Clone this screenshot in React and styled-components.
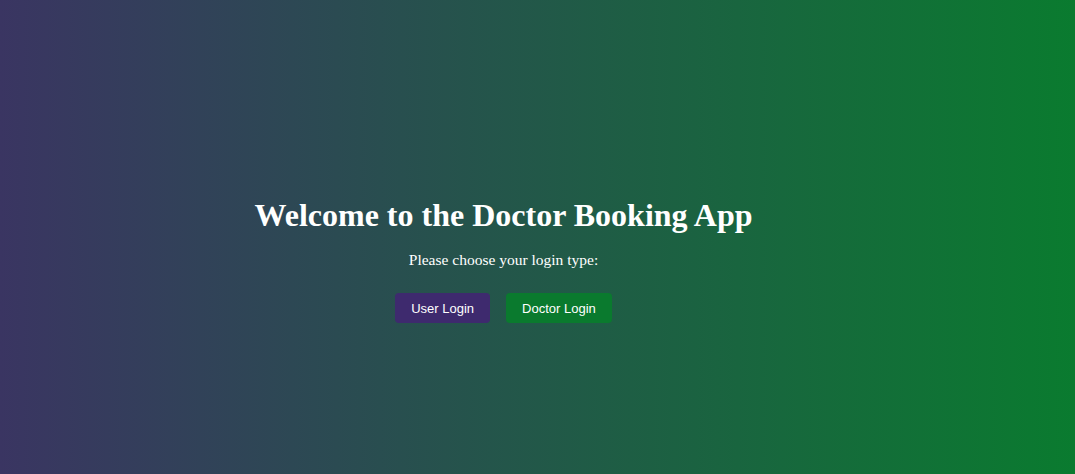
import styled, { createGlobalStyle } from 'styled-components';

const GlobalStyle = createGlobalStyle`
    html, body {
        margin: 0;
        padding: 0;
    }
    body {
        font-family: "Liberation Serif", "Times New Roman", serif;
    }
`;

const Page = styled.div`
    box-sizing: border-box;
    min-height: 100vh;
    display: flex;
    flex-direction: column;
    align-items: center;
    justify-content: center;
    padding: 46px 68px 0 0;
    background: linear-gradient(to right, #3a3562, #0a7b2f);
    color: #ffffff;
    text-align: center;
`;

const Title = styled.h1`
    margin: 0 0 17px;
    font-size: 32px;
    font-weight: bold;
    line-height: 37px;
`;

const Subtitle = styled.p`
    margin: 0 0 24px;
    font-size: 15.5px;
    line-height: 18px;
`;

const ButtonRow = styled.div`
    display: flex;
    gap: 16px;
`;

const LoginButton = styled.button`
    height: 30px;
    padding: 0 16px;
    border: none;
    border-radius: 4px;
    background: ${(p) => (p.$variant === 'doctor' ? '#0a7a2e' : '#3e2a6e')};
    color: #ffffff;
    font-family: "Liberation Sans", Arial, sans-serif;
    font-size: 13px;
    cursor: pointer;
`;

export default function App() {
    return (
        <>
            <GlobalStyle />
            <Page>
                <Title>Welcome to the Doctor Booking App</Title>
                <Subtitle>Please choose your login type:</Subtitle>
                <ButtonRow>
                    <LoginButton $variant="user">User Login</LoginButton>
                    <LoginButton $variant="doctor">Doctor Login</LoginButton>
                </ButtonRow>
            </Page>
        </>
    );
}
